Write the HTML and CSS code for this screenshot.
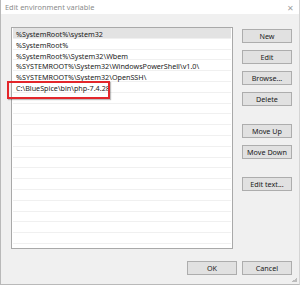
FILE: index.html
```
<!DOCTYPE html>
<html lang="en">
<head>
    <meta charset="UTF-8">
    <title>Edit environment variable</title>
    <link rel="stylesheet" href="styles.css">
</head>
<body>

<div class="window">
    <div class="titlebar">
        <span class="title">Edit environment variable</span>
        <span class="close">&#x2715;</span>
    </div>
    <div class="content">
        <div class="main">
            <div class="listbox">
                <div class="row selected">%SystemRoot%\system32</div>
                <div class="row">%SystemRoot%</div>
                <div class="row">%SystemRoot%\System32\Wbem</div>
                <div class="row">%SYSTEMROOT%\System32\WindowsPowerShell\v1.0\</div>
                <div class="row">%SYSTEMROOT%\System32\OpenSSH\</div>
                <div class="row">C:\BlueSpice\bin\php-7.4.28</div>
                <div class="row"></div>
                <div class="row"></div>
                <div class="row"></div>
                <div class="row"></div>
                <div class="row"></div>
                <div class="row"></div>
                <div class="row"></div>
                <div class="row"></div>
                <div class="row"></div>
                <div class="row"></div>
                <div class="row"></div>
                <div class="row"></div>
                <div class="row"></div>
                <div class="row"></div>
                <!-- annotation box drawn over the new entry -->
                <div class="marker"></div>
            </div>
            <div class="buttons">
                <button>New</button>
                <button>Edit</button>
                <button>Browse...</button>
                <button>Delete</button>
                <button class="spaced">Move Up</button>
                <button>Move Down</button>
                <button class="spaced">Edit text...</button>
            </div>
        </div>
        <div class="footer">
            <button>OK</button>
            <button>Cancel</button>
        </div>
    </div>
    <span class="grip"></span>
</div>

</body>
</html>
```

FILE: styles.css
```
* {
    box-sizing: border-box;
}
body {
    margin: 0;
    padding: 0;
    font-family: "Noto Sans", "Open Sans", sans-serif;
    font-size: 7.2px;
    color: #1a1a1a;
    background-color: #f0f0f0;
}
.window {
    position: relative;
    width: 300px;
    height: 285px;
    background-color: #f0f0f0;
    border-left: 1px solid #b9b9b9;
    border-bottom: 1px solid #b9b9b9;
    border-right: 1px solid #d4d4d4;
    overflow: hidden;
}
.titlebar {
    height: 14px;
    background-color: #ffffff;
    display: flex;
    align-items: center;
    justify-content: space-between;
    padding: 0 5px 0 4px;
}
.title {
    color: #8c8c8c;
    font-size: 7.4px;
}
.close {
    color: #a0a0a0;
    font-size: 8px;
}
.content {
    padding: 13px 7px 0 10px;
}
.main {
    display: flex;
    gap: 9px;
}
.listbox {
    position: relative;
    width: 222px;
    height: 222px;
    background-color: #ffffff;
    border: 1px solid #a9a9a9;
    padding: 0 1px;
}
.row {
    height: 10.8px;
    line-height: 10.8px;
    padding: 1px 0 0 3px;
    border-bottom: 1px solid #f0f0f0;
    white-space: nowrap;
}
.row.selected {
    background-color: #e3e3e3;
}
.marker {
    position: absolute;
    left: -5px;
    top: 53px;
    width: 103px;
    height: 18px;
    border: 2px solid #e3262b;
    box-shadow: 1px 1px 1px rgba(0, 0, 0, 0.25);
}
.buttons {
    display: flex;
    flex-direction: column;
    gap: 7px;
    padding-top: 2px;
}
button {
    width: 50px;
    height: 14px;
    padding: 0;
    font-family: inherit;
    font-size: 7.2px;
    color: #1a1a1a;
    background-color: #e1e1e1;
    border: 1px solid #adadad;
    border-radius: 0;
}
.spaced {
    margin-top: 11px;
}
.footer {
    display: flex;
    justify-content: flex-end;
    gap: 5px;
    padding-top: 12px;
}
.grip {
    position: absolute;
    right: 2px;
    bottom: 2px;
    width: 5px;
    height: 5px;
    background: linear-gradient(135deg, transparent 50%, #bdbdbd 50%);
}
```
